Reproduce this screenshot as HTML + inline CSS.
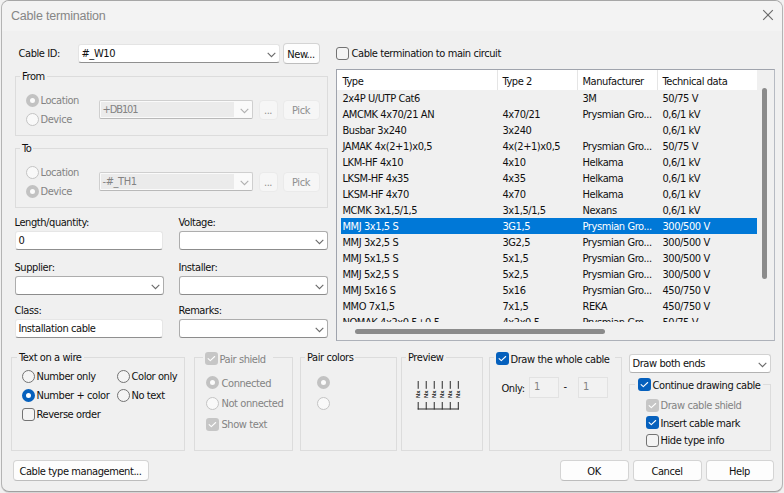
<!DOCTYPE html>
<html lang="en"><head><meta charset="utf-8"><title>Cable termination</title>
<style>
*{box-sizing:border-box;margin:0;padding:0}
html,body{width:784px;height:493px;overflow:hidden;background:#f1f1f1}
body{font-family:"DejaVu Sans Condensed", "Liberation Sans", sans-serif;font-size:11px;letter-spacing:-0.42px;color:#101010;position:relative;line-height:13px}
#shadow{position:absolute;left:1px;top:1px;width:782px;height:492px;border-radius:8px;background:#d6d6d6}
#win{position:absolute;left:1px;top:0;width:782px;height:492px;background:#f0f0f0;border:1px solid #b4b4b4;border-top-color:#a6a6a6;border-bottom-color:#a0a0a0;border-radius:8px;overflow:hidden}
#title{position:absolute;left:0;top:0;width:784px;height:30px;background:#f3f3f3}
#title span{position:absolute;left:9px;top:7px;font-size:12.5px;line-height:16px;letter-spacing:-0.2px;color:#868686;font-family:"Liberation Sans",sans-serif}
#layer{position:absolute;left:0;top:0;width:784px;height:493px}
.abs{position:absolute}
.t{position:absolute;white-space:nowrap;line-height:13px;margin-left:-0.5px}
.dis{color:#838383}
.combo{position:absolute;background:#fff;border:1px solid #e4e4e4;border-bottom-color:#8f8f8f;border-radius:3px}
.combo.l{border-color:#d2d2d2;border-bottom-color:#b2b2b2}
.combo.e{border-color:#adadad;border-bottom-color:#8c8c8c}
.combo.d{background:#fafafa;border-color:#cfcfcf;border-bottom-color:#b9b9b9;border-radius:2px}
.combo.d i{position:absolute;left:1px;top:1px;bottom:1px;right:18px;background:#ebebeb}
.combo .v{position:absolute;left:2.5px;top:2px;line-height:13px;white-space:nowrap}
.combo svg{position:absolute;right:3.5px;top:6.5px}
.inp{position:absolute;background:#fff;border:1px solid #e6e6e6;border-bottom-color:#8f8f8f;border-radius:3px}
.inp .v{position:absolute;left:2.5px;top:2px;line-height:13px;white-space:nowrap}
.btn{position:absolute;background:#fdfdfd;border:1px solid #d4d4d4;border-bottom-color:#bdbdbd;border-radius:4px;text-align:center;white-space:nowrap;text-indent:-1px}
.btn.d{background:#f6f6f6;border-color:#eaeaea;color:#8f8f8f}
.grp{position:absolute;border:1px solid #dcdcdc}
.grp .lg{position:absolute;top:-7px;background:#f0f0f0;padding:0 2px;line-height:13px;white-space:nowrap}
.radio{position:absolute;width:13px;height:13px;border-radius:50%;border:1px solid #737373;background:#f4f4f4}
.radio.on{border:4px solid #0560bd;background:#fff}
.radio.d{border-color:#c4c4c4;background:#f9f9f9}
.radio.d.on{border:4px solid #c2c2c2;background:#fbfbfb}
.cb{position:absolute;width:13px;height:13px;border-radius:3px;border:1px solid #737373;background:#f4f4f4}
.cb.on{border:none;background:#0560bd}
.cb.d.on{background:#c6c6c6}
.cb svg{position:absolute;left:0;top:0}
#list{position:absolute;border:1px solid #a0a4ad;border-right-color:#b6bac2;border-bottom-color:#adb1b9;background:#f0f0f0;overflow:hidden}
#list .hdr{position:absolute;left:0;top:0;width:420px;height:20px;background:#fff}
#list .hdr .t{top:5px}
#list .sep{position:absolute;top:0;width:1px;height:20px;background:#e5e5e5}
.row{position:absolute;left:0;width:420px;height:16px}
.row b{position:absolute;left:4px;top:0;right:0;height:16px;background:#0078d7}
.row.sel{color:#fff}
.row .t{top:2px}
</style></head>
<body>
<div id="shadow"></div>
<div id="win"><div id="title"><span>Cable termination</span></div></div>
<div id="layer">
<svg class="abs" style="left:762px;top:9px" width="12" height="12" viewBox="0 0 12 12"><path d="M1.2 1.2 L10.8 10.8 M10.8 1.2 L1.2 10.8" stroke="#6a6a6a" stroke-width="1.15" fill="none"/></svg>
<div class="t " style="left:19px;top:47px;">Cable ID:</div>
<div class="combo" style="left:78px;top:44px;width:202px;height:19px"><span class="v">#_W10</span><svg width="9" height="6" viewBox="0 0 9 6"><path d="M0.7 0.8 L4.5 4.6 L8.3 0.8" fill="none" stroke="#6a6a6a" stroke-width="1.1"/></svg></div>
<div class="btn" style="left:283px;top:43px;width:37px;height:21px;line-height:21px">New...</div>
<div class="grp" style="left:15px;top:76px;width:313px;height:60px"><span class="lg" style="left:4px">From</span></div>
<div class="radio on d" style="left:26px;top:94px"></div>
<div class="t dis" style="left:41px;top:94px;">Location</div>
<div class="radio d" style="left:26px;top:113px"></div>
<div class="t dis" style="left:41px;top:113px;">Device</div>
<div class="combo d" style="left:99px;top:100px;width:154px;height:19px"><i></i><span class="v dis"><span style="letter-spacing:-1.1px">+DB101</span></span><svg width="9" height="6" viewBox="0 0 9 6"><path d="M0.7 0.8 L4.5 4.6 L8.3 0.8" fill="none" stroke="#b0b0b0" stroke-width="1.1"/></svg></div>
<div class="btn d" style="left:259px;top:100px;width:19px;height:20px;line-height:20px">...</div>
<div class="btn d" style="left:283px;top:100px;width:37px;height:20px;line-height:20px">Pick</div>
<div class="grp" style="left:15px;top:148px;width:313px;height:60px"><span class="lg" style="left:4px">To</span></div>
<div class="radio d" style="left:26px;top:166px"></div>
<div class="t dis" style="left:41px;top:166px;">Location</div>
<div class="radio on d" style="left:26px;top:185px"></div>
<div class="t dis" style="left:41px;top:185px;">Device</div>
<div class="combo d" style="left:99px;top:172px;width:154px;height:19px"><i></i><span class="v dis">-#_TH1</span><svg width="9" height="6" viewBox="0 0 9 6"><path d="M0.7 0.8 L4.5 4.6 L8.3 0.8" fill="none" stroke="#b0b0b0" stroke-width="1.1"/></svg></div>
<div class="btn d" style="left:259px;top:172px;width:19px;height:20px;line-height:20px">...</div>
<div class="btn d" style="left:283px;top:172px;width:37px;height:20px;line-height:20px">Pick</div>
<div class="t " style="left:15px;top:216px;">Length/quantity:</div>
<div class="inp" style="left:15px;top:231px;width:148px;height:19px"><span class="v">0</span></div>
<div class="t " style="left:179px;top:216px;">Voltage:</div>
<div class="combo e" style="left:179px;top:231px;width:149px;height:19px"><span class="v"></span><svg width="9" height="6" viewBox="0 0 9 6"><path d="M0.7 0.8 L4.5 4.6 L8.3 0.8" fill="none" stroke="#6a6a6a" stroke-width="1.1"/></svg></div>
<div class="t " style="left:15px;top:261px;">Supplier:</div>
<div class="combo e" style="left:15px;top:276px;width:149px;height:19px"><span class="v"></span><svg width="9" height="6" viewBox="0 0 9 6"><path d="M0.7 0.8 L4.5 4.6 L8.3 0.8" fill="none" stroke="#6a6a6a" stroke-width="1.1"/></svg></div>
<div class="t " style="left:179px;top:261px;">Installer:</div>
<div class="combo e" style="left:179px;top:276px;width:149px;height:19px"><span class="v"></span><svg width="9" height="6" viewBox="0 0 9 6"><path d="M0.7 0.8 L4.5 4.6 L8.3 0.8" fill="none" stroke="#6a6a6a" stroke-width="1.1"/></svg></div>
<div class="t " style="left:15px;top:304px;">Class:</div>
<div class="inp" style="left:15px;top:319px;width:148px;height:19px"><span class="v">Installation cable</span></div>
<div class="t " style="left:179px;top:304px;">Remarks:</div>
<div class="combo e" style="left:179px;top:319px;width:149px;height:19px"><span class="v"></span><svg width="9" height="6" viewBox="0 0 9 6"><path d="M0.7 0.8 L4.5 4.6 L8.3 0.8" fill="none" stroke="#6a6a6a" stroke-width="1.1"/></svg></div>
<div class="cb" style="left:336px;top:47px"></div>
<div class="t " style="left:352px;top:47px;">Cable termination to main circuit</div>
<div id="list" style="left:336px;top:69px;width:439px;height:272px"><div class="hdr"><div class="t" style="left:6px">Type</div><div class="t" style="left:166px">Type 2</div><div class="t" style="left:246px">Manufacturer</div><div class="t" style="left:326px">Technical data</div></div><div class="sep" style="left:160px"></div><div class="sep" style="left:240px"></div><div class="sep" style="left:320px"></div><div class="row" style="top:20px"><div class="t" style="left:6px">2x4P U/UTP Cat6</div><div class="t" style="left:246px">3M</div><div class="t" style="left:326px">50/75 V</div></div><div class="row" style="top:36px"><div class="t" style="left:6px">AMCMK 4x70/21 AN</div><div class="t" style="left:166px">4x70/21</div><div class="t" style="left:246px">Prysmian Gro...</div><div class="t" style="left:326px">0,6/1 kV</div></div><div class="row" style="top:52px"><div class="t" style="left:6px">Busbar 3x240</div><div class="t" style="left:166px">3x240</div><div class="t" style="left:326px">0,6/1 kV</div></div><div class="row" style="top:68px"><div class="t" style="left:6px">JAMAK 4x(2+1)x0,5</div><div class="t" style="left:166px">4x(2+1)x0,5</div><div class="t" style="left:246px">Prysmian Gro...</div><div class="t" style="left:326px">50/75 V</div></div><div class="row" style="top:84px"><div class="t" style="left:6px">LKM-HF 4x10</div><div class="t" style="left:166px">4x10</div><div class="t" style="left:246px">Helkama</div><div class="t" style="left:326px">0,6/1 kV</div></div><div class="row" style="top:100px"><div class="t" style="left:6px">LKSM-HF 4x35</div><div class="t" style="left:166px">4x35</div><div class="t" style="left:246px">Helkama</div><div class="t" style="left:326px">0,6/1 kV</div></div><div class="row" style="top:116px"><div class="t" style="left:6px">LKSM-HF 4x70</div><div class="t" style="left:166px">4x70</div><div class="t" style="left:246px">Helkama</div><div class="t" style="left:326px">0,6/1 kV</div></div><div class="row" style="top:132px"><div class="t" style="left:6px">MCMK 3x1,5/1,5</div><div class="t" style="left:166px">3x1,5/1,5</div><div class="t" style="left:246px">Nexans</div><div class="t" style="left:326px">0,6/1 kV</div></div><div class="row sel" style="top:148px"><b></b><div class="t" style="left:6px">MMJ 3x1,5 S</div><div class="t" style="left:166px">3G1,5</div><div class="t" style="left:246px">Prysmian Gro...</div><div class="t" style="left:326px">300/500 V</div></div><div class="row" style="top:164px"><div class="t" style="left:6px">MMJ 3x2,5 S</div><div class="t" style="left:166px">3G2,5</div><div class="t" style="left:246px">Prysmian Gro...</div><div class="t" style="left:326px">300/500 V</div></div><div class="row" style="top:180px"><div class="t" style="left:6px">MMJ 5x1,5 S</div><div class="t" style="left:166px">5x1,5</div><div class="t" style="left:246px">Prysmian Gro...</div><div class="t" style="left:326px">300/500 V</div></div><div class="row" style="top:196px"><div class="t" style="left:6px">MMJ 5x2,5 S</div><div class="t" style="left:166px">5x2,5</div><div class="t" style="left:246px">Prysmian Gro...</div><div class="t" style="left:326px">300/500 V</div></div><div class="row" style="top:212px"><div class="t" style="left:6px">MMJ 5x16 S</div><div class="t" style="left:166px">5x16</div><div class="t" style="left:246px">Prysmian Gro...</div><div class="t" style="left:326px">450/750 V</div></div><div class="row" style="top:228px"><div class="t" style="left:6px">MMO 7x1,5</div><div class="t" style="left:166px">7x1,5</div><div class="t" style="left:246px">REKA</div><div class="t" style="left:326px">450/750 V</div></div><div class="row" style="top:244px"><div class="t" style="left:6px">NOMAK 4x2x0,5+0,5</div><div class="t" style="left:166px">4x2x0,5</div><div class="t" style="left:246px">Prysmian Gro...</div><div class="t" style="left:326px">50/75 V</div></div><div class="abs" style="left:0;top:252px;width:440px;height:20px;background:#f0f0f0"></div><div class="abs" style="left:17.5px;top:259px;width:250px;height:5px;background:#8b8b8b;border-radius:2.5px"></div><div class="abs" style="left:425px;top:18px;width:5px;height:191px;background:#8b8b8b;border-radius:2.5px"></div></div>
<div class="grp" style="left:11px;top:357px;width:174px;height:94px"><span class="lg" style="left:5px">Text on a wire</span></div>
<div class="radio" style="left:22px;top:370px"></div>
<div class="t " style="left:37px;top:370px;">Number only</div>
<div class="radio" style="left:117px;top:370px"></div>
<div class="t " style="left:132px;top:370px;">Color only</div>
<div class="radio on" style="left:22px;top:389px"></div>
<div class="t " style="left:37px;top:389px;">Number + color</div>
<div class="radio" style="left:117px;top:389px"></div>
<div class="t " style="left:132px;top:389px;">No text</div>
<div class="cb" style="left:22px;top:408px"></div>
<div class="t " style="left:37px;top:408px;">Reverse order</div>
<div class="grp" style="left:194px;top:357px;width:99px;height:94px"></div>
<div class="abs" style="left:203px;top:350px;width:70px;height:16px;background:#f0f0f0"></div>
<div class="cb on d" style="left:205px;top:352px"><svg width="13" height="13" viewBox="0 0 13 13"><path d="M3.1 6.6 L5.3 8.7 L9.7 4.5" fill="none" stroke="#fff" stroke-width="1.05" stroke-linecap="round" stroke-linejoin="round"/></svg></div>
<div class="t dis" style="left:220px;top:353px;">Pair shield</div>
<div class="radio on d" style="left:206px;top:376px"></div>
<div class="t dis" style="left:222px;top:377px;">Connected</div>
<div class="radio d" style="left:206px;top:397px"></div>
<div class="t dis" style="left:222px;top:397px;">Not onnected</div>
<div class="cb on d" style="left:206px;top:418px"><svg width="13" height="13" viewBox="0 0 13 13"><path d="M3.1 6.6 L5.3 8.7 L9.7 4.5" fill="none" stroke="#fff" stroke-width="1.05" stroke-linecap="round" stroke-linejoin="round"/></svg></div>
<div class="t dis" style="left:222px;top:418px;">Show text</div>
<div class="grp" style="left:300px;top:357px;width:97px;height:94px"><span class="lg" style="left:4px">Pair colors</span></div>
<div class="radio on d" style="left:317px;top:376px"></div>
<div class="radio d" style="left:317px;top:397px"></div>
<div class="grp" style="left:401px;top:357px;width:82px;height:94px"><span class="lg" style="left:4px">Preview</span></div>
<svg class="abs" style="left:410px;top:376px" width="60" height="40" viewBox="0 0 60 40"><path d="M8.20 5 V12.8 M8.20 26 V33.5" stroke="#2a2a2a" stroke-width="1" fill="none"/><text transform="translate(10.20 22) rotate(-90)" font-size="5.8" font-weight="bold" letter-spacing="0" font-family="Liberation Sans, sans-serif" fill="#111">Nx</text><path d="M16.22 5 V12.8 M16.22 26 V33.5" stroke="#2a2a2a" stroke-width="1" fill="none"/><text transform="translate(18.22 22) rotate(-90)" font-size="5.8" font-weight="bold" letter-spacing="0" font-family="Liberation Sans, sans-serif" fill="#111">Nx</text><path d="M24.24 5 V12.8 M24.24 26 V33.5" stroke="#2a2a2a" stroke-width="1" fill="none"/><text transform="translate(26.24 22) rotate(-90)" font-size="5.8" font-weight="bold" letter-spacing="0" font-family="Liberation Sans, sans-serif" fill="#111">Nx</text><path d="M32.26 5 V12.8 M32.26 26 V33.5" stroke="#2a2a2a" stroke-width="1" fill="none"/><text transform="translate(34.26 22) rotate(-90)" font-size="5.8" font-weight="bold" letter-spacing="0" font-family="Liberation Sans, sans-serif" fill="#111">Nx</text><path d="M40.28 5 V12.8 M40.28 26 V33.5" stroke="#2a2a2a" stroke-width="1" fill="none"/><text transform="translate(42.28 22) rotate(-90)" font-size="5.8" font-weight="bold" letter-spacing="0" font-family="Liberation Sans, sans-serif" fill="#111">Nx</text><path d="M48.30 5 V12.8 M48.30 26 V33.5" stroke="#2a2a2a" stroke-width="1" fill="none"/><text transform="translate(50.30 22) rotate(-90)" font-size="5.8" font-weight="bold" letter-spacing="0" font-family="Liberation Sans, sans-serif" fill="#111">Nx</text><path d="M7.7 33 H48.8" stroke="#2a2a2a" stroke-width="1" fill="none"/></svg>
<div class="grp" style="left:489px;top:357px;width:133px;height:94px"></div>
<div class="abs" style="left:494px;top:350px;width:121px;height:16px;background:#f0f0f0"></div>
<div class="cb on" style="left:496px;top:352px"><svg width="13" height="13" viewBox="0 0 13 13"><path d="M3.1 6.6 L5.3 8.7 L9.7 4.5" fill="none" stroke="#fff" stroke-width="1.05" stroke-linecap="round" stroke-linejoin="round"/></svg></div>
<div class="t " style="left:511px;top:353px;">Draw the whole cable</div>
<div class="t " style="left:502px;top:382px;">Only:</div>
<div class="inp" style="left:529px;top:377px;width:30px;height:21px;background:#f2f2f2;border-color:#e2e2e2;border-radius:0"><span class="v dis" style="left:4px;top:2px">1</span></div>
<div class="t " style="left:564px;top:380px;">-</div>
<div class="inp" style="left:578px;top:377px;width:30px;height:21px;background:#f2f2f2;border-color:#e2e2e2;border-radius:0"><span class="v dis" style="left:4px;top:2px">1</span></div>
<div class="combo l" style="left:629px;top:354px;width:142px;height:19px"><span class="v">Draw both ends</span><svg width="9" height="6" viewBox="0 0 9 6"><path d="M0.7 0.8 L4.5 4.6 L8.3 0.8" fill="none" stroke="#6a6a6a" stroke-width="1.1"/></svg></div>
<div class="grp" style="left:629px;top:384px;width:142px;height:67px"></div>
<div class="abs" style="left:635px;top:377px;width:128px;height:16px;background:#f0f0f0"></div>
<div class="cb on" style="left:638px;top:378px"><svg width="13" height="13" viewBox="0 0 13 13"><path d="M3.1 6.6 L5.3 8.7 L9.7 4.5" fill="none" stroke="#fff" stroke-width="1.05" stroke-linecap="round" stroke-linejoin="round"/></svg></div>
<div class="t " style="left:653px;top:379px;">Continue drawing cable</div>
<div class="cb on d" style="left:646px;top:399px"><svg width="13" height="13" viewBox="0 0 13 13"><path d="M3.1 6.6 L5.3 8.7 L9.7 4.5" fill="none" stroke="#fff" stroke-width="1.05" stroke-linecap="round" stroke-linejoin="round"/></svg></div>
<div class="t dis" style="left:661px;top:399px;">Draw cable shield</div>
<div class="cb on" style="left:646px;top:416px"><svg width="13" height="13" viewBox="0 0 13 13"><path d="M3.1 6.6 L5.3 8.7 L9.7 4.5" fill="none" stroke="#fff" stroke-width="1.05" stroke-linecap="round" stroke-linejoin="round"/></svg></div>
<div class="t " style="left:661px;top:417px;">Insert cable mark</div>
<div class="cb" style="left:646px;top:434px"></div>
<div class="t " style="left:661px;top:434px;">Hide type info</div>
<div class="btn" style="left:13px;top:460px;width:136px;height:21px;line-height:21px">Cable type management...</div>
<div class="btn" style="left:560px;top:460px;width:69px;height:21px;line-height:21px">OK</div>
<div class="btn" style="left:633px;top:460px;width:69px;height:21px;line-height:21px">Cancel</div>
<div class="btn" style="left:706px;top:460px;width:68px;height:21px;line-height:21px">Help</div>
</div>
</body></html>
